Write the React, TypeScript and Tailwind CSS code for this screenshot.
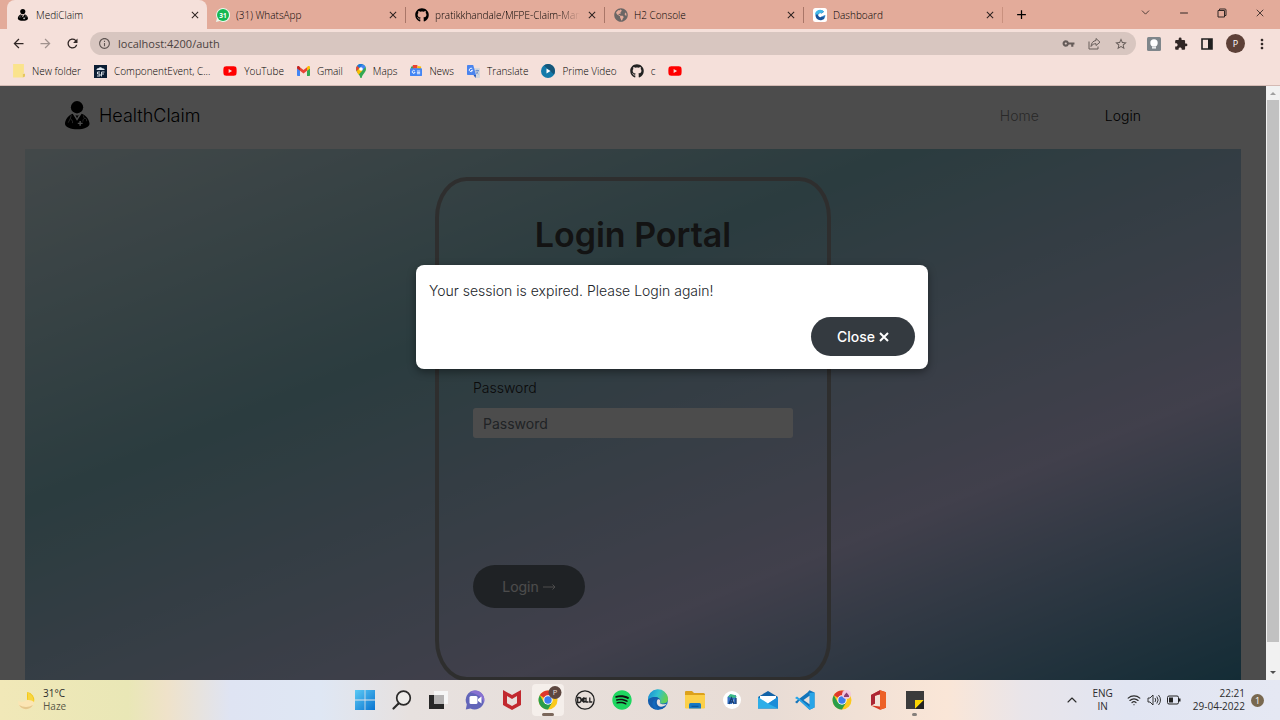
import type { ReactNode } from "react";
import { FaGithub, FaYoutube, FaSpotify, FaGlobeAmericas } from "react-icons/fa";
import {
  MdClose,
  MdAdd,
  MdArrowBack,
  MdArrowForward,
  MdRefresh,
  MdInfoOutline,
  MdVpnKey,
  MdStarBorder,
  MdMoreVert,
  MdExtension,
} from "react-icons/md";
import { ChevronDown, ChevronUp, Minus, X, Wifi } from "lucide-react";

function Doctor({ className }: { className: string }) {
  return (
    <svg viewBox="0 0 26 30" className={className} aria-hidden="true">
      <circle cx="12.5" cy="6.5" r="6.4" fill="#000" />
      <path
        d="M8 13.200 12.500 20.500l4.800-7.300c5 2 8.200 6.500 8.200 10.500 0 3.600-6 5.800-12.700 5.800S0 27.300 0 23.700c0-4 3-8.500 8-10.500Z"
        fill="#000"
      />
      <path d="m10.800 14.300 1.200.7h1.200l1.200-.7-1.900 3.700Z" fill="#000" />
      <path
        d="M6.500 14.800 5.600 18m0 0-2.200 4.500m2.200-4.500 2.200 3v2M19 15l1 3m-1.500 3.500c0-2 1-3.500 2.300-3.500s1.700 1 1.700 3"
        fill="none"
        stroke="#aaa"
        strokeWidth=".8"
      />
      <path d="M15 20.800h1.500v1.700h1.800V24h-1.800v1.800H15V24h-1.700v-1.500H15Z" fill="#fff" />
    </svg>
  );
}

function WhatsApp() {
  return (
    <svg viewBox="0 0 14 14" className="size-[14px] shrink-0" aria-hidden="true">
      <path d="M7 0a7 7 0 1 1-3.300 13.100L0 14l.9-3.700A7 7 0 0 1 7 0Z" fill="#e9f7ec" />
      <circle cx="7" cy="7" r="6" fill="#16b853" />
      <text x="7" y="9.500" textAnchor="middle" fontSize="6.500" fontWeight="700" fill="#fff" fontFamily="Open Sans, sans-serif">31</text>
    </svg>
  );
}

function DashboardMark() {
  return (
    <svg viewBox="0 0 14 14" className="size-[14px] shrink-0" aria-hidden="true">
      <rect width="14" height="14" rx="2.500" fill="#fff" />
      <path d="M12 9.500A5 5 0 1 1 11 3.700L8.500 5.500a2 2 0 1 0 .2 2.900Z" fill="#17539c" />
      <path d="M2 6.500A5 5 0 0 1 11 3.700L8.500 5.300A3 3 0 0 0 5 6.500Z" fill="#42b7e8" />
      <path d="m8.500 8.400 3.500 1.100.3-2.500Z" fill="#2b7cc4" />
    </svg>
  );
}

function Gmail() {
  return (
    <svg viewBox="0 0 13 10" className="w-[13px] shrink-0" aria-hidden="true">
      <path d="M0 2v7.200c0 .5.300.8.800.8H3V4.500Z" fill="#4285f4" />
      <path d="M13 2v7.200c0 .5-.3.800-.8.800H10V4.500Z" fill="#34a853" />
      <path d="M3 1.200 6.500 4 10 1.200v3.600L6.500 7.400 3 4.800Z" fill="#ea4335" />
      <path d="M0 1.500C0 .2 1.300-.3 2.300.5l.7.600v3.700L0 2.600Z" fill="#c5221f" />
      <path d="M13 1.500c0-1.300-1.300-1.800-2.300-1l-.7.600v3.700l3-2.200Z" fill="#fbbc04" />
    </svg>
  );
}

function MapsPin() {
  return (
    <svg viewBox="0 0 10 14" className="h-[14px] shrink-0" aria-hidden="true">
      <path d="M5 0a5 5 0 0 1 5 5c0 3.500-3.600 5-4.200 8.400-.2.800-1.400.8-1.600 0C3.700 10 0 8.500 0 5a5 5 0 0 1 5-5Z" fill="#34a853" />
      <path d="M1.200 1.800 3.500 4 .7 7.300A5 5 0 0 1 1.200 1.800Z" fill="#ea4335" />
      <path d="M1.200 1.800A5 5 0 0 1 6.500.2L3.500 4Z" fill="#1a73e8" />
      <path d="M6.500.2a5 5 0 0 1 3.100 2.700L6.500 6.500 3.500 4Z" fill="#4285f4" />
      <path d="M.7 7.300 3.500 4l3 2.500-4 4.300A17 17 0 0 1 .7 7.300Z" fill="#fbbc04" />
      <circle cx="5" cy="5" r="1.800" fill="#fff" />
    </svg>
  );
}

function News() {
  return (
    <svg viewBox="0 0 13 12" className="w-3 shrink-0" aria-hidden="true">
      <path d="M1 2 4 1v4H1Z" fill="#34a853" />
      <path d="M3 0h5v4H3Z" fill="#ea4335" />
      <path d="m8 1 4 .6V5H8Z" fill="#fbbc04" />
      <rect y="3.500" width="13" height="8.500" rx="1" fill="#4285f4" />
      <path d="M5.300 6.500A1.600 1.600 0 1 0 5.500 8H4M7.500 6.500h3.500M7.500 8h3.500M7.500 9.500h3.500" fill="none" stroke="#fff" strokeWidth=".9" />
    </svg>
  );
}

function Translate() {
  return (
    <svg viewBox="0 0 13 13" className="w-[13px] shrink-0" aria-hidden="true">
      <path d="M5 3h7.300c.4 0 .7.300.7.700v8.600c0 .4-.3.700-.7.700H8.500Z" fill="#d3d7de" />
      <path d="M.7 0h5.500L9 10H.7a.7.700 0 0 1-.7-.7V.7C0 .3.300 0 .7 0Z" fill="#4a84ee" />
      <path d="m6.500 10 2 3L9 10Z" fill="#2452b5" />
      <path d="M5.400 4a1.700 1.700 0 1 0 .2 1.500H4" fill="none" stroke="#fff" strokeWidth=".9" />
      <path d="M8.500 5.500H12M10 4.700v.8m1.200 0c-.2 1.500-1 2.500-2.200 3.300m0-2.500c.6 1.200 1.500 2 2.500 2.800" fill="none" stroke="#547fc5" strokeWidth=".7" />
    </svg>
  );
}

function PrimeVideo() {
  return (
    <svg viewBox="0 0 14 14" className="size-[14px] shrink-0" aria-hidden="true">
      <circle cx="7" cy="7" r="7" fill="#137aaa" />
      <path d="M7 0a7 7 0 0 1 6 10.500L3 1.500A7 7 0 0 1 7 0Z" fill="#155679" />
      <path d="m5.500 4.500 4 2.500-4 2.500Z" fill="#fff" />
    </svg>
  );
}

function ForceBadge() {
  return (
    <svg viewBox="0 0 13 13" className="size-[13px] shrink-0" aria-hidden="true">
      <rect width="13" height="13" fill="#0b1d33" />
      <path d="M2.500 5C2.500 3.300 4 3 4.500 3.200c.8-1.400 3-1.400 3.500 0 1.500-.3 2.800.6 2.700 1.800Z" fill="#dfe8f0" />
      <path d="M6 7H3.500v2H6v2H3M7.500 11.500V7h3M7.500 9h2.500" fill="none" stroke="#e8eef4" strokeWidth=".9" />
    </svg>
  );
}

function Tab({ icon, title, active, fade, last }: { icon: ReactNode; title: string; active?: boolean; fade?: boolean; last?: boolean }) {
  const shape = active ? "rounded-t-lg bg-[#f5e0da] w-[200px]" : "w-[199px]";
  const divider = active ? "" : last ? "border-r border-[#c9917f]" : "border-r border-[#a97668]";
  return (
    <div className={`${shape} flex h-[29px] items-center`}>
      <div className={`${divider} flex h-4 w-full items-center gap-[6px] pr-[6px] pl-[9px]`}>
        {icon}
        <span
          className={`min-w-0 flex-1 overflow-hidden whitespace-nowrap ${fade ? "[mask-image:linear-gradient(to_right,#000_85%,transparent)]" : ""}`}
        >
          {title}
        </span>
        <button aria-label={`Close ${title}`} className="grid w-3 shrink-0 place-items-center">
          <MdClose className="size-3 text-[#2d2220]" />
        </button>
      </div>
    </div>
  );
}

function TabStrip() {
  return (
    <div className="flex h-[29px] shrink-0 items-center justify-between bg-[#e3ab9a] pl-[7px]">
      <div className="flex text-[10px] leading-4 font-light text-black">
        <Tab active title="MediClaim" icon={<Doctor className="h-3 w-[14px] shrink-0" />} />
        <Tab title="(31) WhatsApp" icon={<WhatsApp />} />
        <Tab fade title="pratikkhandale/MFPE-Claim-Man" icon={<FaGithub className="size-[14px] shrink-0" />} />
        <Tab title="H2 Console" icon={<FaGlobeAmericas className="size-[14px] shrink-0 text-[#6b6665]" />} />
        <Tab last title="Dashboard" icon={<DashboardMark />} />
        <button aria-label="New tab" className="ml-[10px] grid w-4 place-items-center">
          <MdAdd className="size-[15px]" />
        </button>
      </div>
      <div className="flex items-center gap-[26px] pr-[14px] pb-1">
        <button aria-label="Search tabs"><ChevronDown className="size-[13px]" strokeWidth={1.5} /></button>
        <button aria-label="Minimize"><Minus className="size-3" strokeWidth={2} /></button>
        <button aria-label="Restore">
          <svg viewBox="-1 0 12 10" className="h-[10px] w-3" fill="none" stroke="currentColor">
            <path d="M1 2.500h6.500V9H1ZM2.500 2.500V1H8q1 0 1 1v5.500H7.500" />
          </svg>
        </button>
        <button aria-label="Close window"><X className="size-3" strokeWidth={1.7} /></button>
      </div>
    </div>
  );
}

function AddressBar() {
  return (
    <div className="flex h-[29px] shrink-0 items-center bg-[#f5e0da] pr-[14px] pl-[11px]">
      <div className="flex items-center gap-3">
        <button aria-label="Back"><MdArrowBack className="size-[15px]" /></button>
        <button aria-label="Forward"><MdArrowForward className="size-[15px] text-[#a1928e]" /></button>
        <button aria-label="Reload"><MdRefresh className="size-[15px]" /></button>
      </div>
      <div className="ml-[10px] flex h-[23px] min-w-0 flex-1 items-center rounded-full bg-[#d8c6c0] px-2">
        <MdInfoOutline className="size-[13px] text-[#5f5552]" />
        <input
          aria-label="Address"
          defaultValue="localhost:4200/auth"
          className="ml-[7px] min-w-0 flex-1 bg-transparent text-[11px] leading-4 text-[#4b4240] outline-none"
        />
        <div className="flex items-center gap-[13px] text-[#665c59]">
          <button aria-label="Passwords"><MdVpnKey className="size-[13px]" /></button>
          <button aria-label="Share">
            <svg viewBox="0 0 13 13" className="size-[13px]" fill="none" stroke="currentColor">
              <path d="M1 4.500v7.500h9V9.500M8 1.500l4 3.700L8 8.500V6.700C6 6.600 4.300 7.400 3 9.500c.3-3.500 2-5.600 5-6Z" />
            </svg>
          </button>
          <button aria-label="Bookmark"><MdStarBorder className="size-[14px]" /></button>
        </div>
      </div>
      <div className="ml-[11px] flex items-center gap-[13px]">
        <button aria-label="Extension">
          <svg viewBox="0 0 14 14" className="size-[14px]">
            <rect width="14" height="14" rx="1.500" fill="#7f868b" />
            <circle cx="7" cy="6" r="3.700" fill="#fff" />
            <path d="M5 8h4v3.500H5Z" fill="#fff" />
            <path d="M5 9.800h4" stroke="#9aa0a4" strokeWidth=".7" />
          </svg>
        </button>
        <button aria-label="Extensions"><MdExtension className="size-[14px]" /></button>
        <button aria-label="Side panel">
          <svg viewBox="0 0 12 12" className="size-3">
            <path d="M1 1h10v10H1Z" fill="none" stroke="#202020" strokeWidth="1.600" />
            <path d="M7 1h4v10H7Z" fill="#202020" />
          </svg>
        </button>
        <button aria-label="Profile" className="grid size-[19px] place-items-center rounded-full bg-[#5d4037] text-[9px] text-white">P</button>
        <button aria-label="Menu" className="-mx-1"><MdMoreVert className="size-4" /></button>
      </div>
    </div>
  );
}

function Bookmark({ icon, label, name }: { icon: ReactNode; label?: string; name?: string }) {
  return (
    <a href="#" aria-label={name} className="flex items-center gap-[7px]">
      {icon}
      {label && <span className="whitespace-nowrap">{label}</span>}
    </a>
  );
}

function Bookmarks() {
  return (
    <nav aria-label="Bookmarks" className="flex h-7 shrink-0 items-center gap-[13px] border-b border-[#d4bab4] bg-[#f5e0da] px-3 pb-px text-[10px] leading-4 font-light text-black">
      <Bookmark
        label="New folder"
        icon={
          <svg viewBox="0 0 12 13" className="w-[13px] shrink-0">
            <path d="M1 0h10v8l-1 1v3.500H1Z" fill="#fae38c" />
            <path d="M10 9h2v2.500l-2 1Z" fill="#e6c75c" />
          </svg>
        }
      />
      <Bookmark label="ComponentEvent, C..." icon={<ForceBadge />} />
      <Bookmark label="YouTube" icon={<FaYoutube className="size-[14px] text-[#f00]" />} />
      <Bookmark label="Gmail" icon={<Gmail />} />
      <Bookmark label="Maps" icon={<MapsPin />} />
      <Bookmark label="News" icon={<News />} />
      <Bookmark label="Translate" icon={<Translate />} />
      <Bookmark label="Prime Video" icon={<PrimeVideo />} />
      <Bookmark label="c" icon={<FaGithub className="size-[14px] text-[#222]" />} />
      <Bookmark name="YouTube" icon={<FaYoutube className="size-[14px] text-[#f00]" />} />
    </nav>
  );
}

function Site() {
  return (
    <div className="relative min-w-0 flex-1 overflow-hidden bg-white font-[Inter,sans-serif]">
      <header className="flex h-[63px] items-center justify-between pr-[125px] pb-1 pl-[65px]">
        <a href="#" className="flex items-center gap-[9px] text-[18px] font-light text-black">
          <Doctor className="w-[25px]" />
          HealthClaim
        </a>
        <nav className="flex gap-[66px] text-[14px] font-light">
          <a href="#" className="text-[#8a8a8a]">Home</a>
          <a href="#" className="text-black">Login</a>
        </nav>
      </header>
      <main className="mx-[25px] flex justify-center bg-[linear-gradient(158deg,#dff2f6_0%,#90c9d3_35%,#dad5fd_71%,#4294b4_100%)] pt-7">
        <form className="flex h-[504px] w-[396px] flex-col rounded-[8%] border-4 border-[#9c9c9c] px-[34px] pt-8">
          <h1 className="text-center text-[34px] leading-[44px] font-semibold text-[#404040]">Login Portal</h1>
          <input aria-label="Username" className="mt-[50px] h-[30px] rounded-[3px] bg-white px-[10px] text-[14px]" />
          <label htmlFor="password" className="mt-[41px] text-[14px] leading-5 font-light text-[#222]">Password</label>
          <input id="password" type="password" placeholder="Password" className="mt-[10px] h-[30px] rounded-[3px] bg-white px-[10px] text-[14px] placeholder:text-[#6c757d]" />
          <button type="button" className="mt-[127px] flex h-[43px] w-28 items-center justify-center gap-1 rounded-full bg-[#6a747d] text-[14px] text-white">
            Login
            <svg viewBox="0 0 13 8" className="w-[13px]" fill="none" stroke="currentColor"><path d="M0 4h12M9.500 1.500 12 4l-2.500 2.500" /></svg>
          </button>
        </form>
      </main>
      <div className="absolute inset-0 bg-black/70 pt-[179px] pl-[78px]">
        <div role="alertdialog" aria-labelledby="session-message" className="mx-auto flex h-[104px] w-[512px] flex-col justify-between rounded-lg bg-white p-[13px] shadow-[0_3px_8px_rgba(0,0,0,0.4)]">
          <p id="session-message" className="pt-[3px] text-[14px] leading-5 font-light text-[#212529]">Your session is expired. Please Login again!</p>
          <button className="flex h-[39px] w-[104px] items-center justify-center gap-1 self-end rounded-full bg-[#343a40] text-[14px] font-medium text-white">
            Close
            <svg viewBox="0 0 10 10" className="size-[10px]" stroke="currentColor" strokeWidth="2"><path d="m1 1 8 8M9 1 1 9" /></svg>
          </button>
        </div>
      </div>
    </div>
  );
}

function Scrollbar() {
  return (
    <div className="flex w-[14px] shrink-0 flex-col items-center bg-[#f1f1f1]" aria-hidden="true">
      <svg viewBox="0 0 14 14" className="size-[14px] shrink-0"><path d="m4 9 3-3 3 3Z" fill="#a0a0a0" /></svg>
      <div className="w-3 flex-1 bg-[#c1c1c1]" />
      <svg viewBox="0 0 14 38" className="h-[38px] w-[14px] shrink-0"><path d="m4 29 3 3 3-3Z" fill="#505050" /></svg>
    </div>
  );
}

const apps: { name: string; art: ReactNode }[] = [
  { name: "Start", art: <><defs><linearGradient id="win" x2="1" y2="1"><stop stopColor="#5ccaf5" /><stop offset="1" stopColor="#0873d0" /></linearGradient></defs><path d="M0 0h9.600v9.600H0ZM10.400 0H20v9.600h-9.600ZM0 10.400h9.600V20H0ZM10.400 10.400H20V20h-9.600Z" fill="url(#win)" /></> },
  { name: "Search", art: <><circle cx="11.500" cy="8" r="6.800" fill="#eeecea" stroke="#2a2929" strokeWidth="1.700" /><path d="m6.500 13.500-5 5" stroke="#2a2929" strokeWidth="2.200" strokeLinecap="round" /></> },
  { name: "Task view", art: <><path d="M1 5h15v14H1Z" fill="#272727" /><path d="M6 1h14v13H6Z" fill="#f6f6f6" /><path d="M6 5h10v9H6Z" fill="#b5b3b3" /></> },
  { name: "Chat", art: <><path d="M10 .5a9.500 9.500 0 1 1-4.500 18L.8 19.500l1-5A9.500 9.500 0 0 1 10 .5Z" fill="#6265b9" /><path d="M10 .5A9.500 9.500 0 0 1 19 13c-3-9-10-9-14-11A9 9 0 0 1 10 .5Z" fill="#8771d1" /><rect x="4.500" y="6" width="8" height="8" rx="1.500" fill="#fff" /><path d="m13 9 3.500-2.500v7L13 11Z" fill="#fff" /></> },
  { name: "McAfee", art: <path d="M1 0 10 5l9-5v15l-9 5-9-5ZM5 6v7.200l5 2.800 5-2.800V6l-5 3Z" fill="#c2292f" fillRule="evenodd" /> },
  { name: "Chrome", art: <Chrome badge /> },
  { name: "Dell", art: <><circle cx="10" cy="10" r="9.200" fill="none" stroke="#202020" strokeWidth="1.300" /><path d="M2.700 7.500v5h1.200q2.200 0 2.200-2.500T3.900 7.500ZM6.200 10l2.700-2.200 1 .7-2 1.500 2 1.500-1 .7ZM11 7.500v4.500h2.500M14.800 7.500v4.500h2.500" fill="none" stroke="#202020" strokeWidth="1.300" /></> },
  { name: "Spotify", art: <><circle cx="10" cy="10" r="9" fill="#111" /><FaSpotify size={20} color="#1ed760" /></> },
  { name: "Edge", art: <><defs><linearGradient id="edge" x2="1" y2=".3"><stop stopColor="#1687d4" /><stop offset=".55" stopColor="#32c1d0" /><stop offset="1" stopColor="#62cf55" /></linearGradient></defs><circle cx="10" cy="10" r="10" fill="#1268bd" /><path d="M0 10A10 10 0 0 1 20 8.500c.5 4-3 5.200-6.500 5-1.800-.2-2-1-1.200-2.200C13 8 5.500 4.500 0 10Z" fill="url(#edge)" /><path d="M0 10c5.500-5.500 13-2 12.300 1.300-1 1.800.3 3.300 4 3.200 1.200 0 2-.5 2.700-.8A10 10 0 0 1 14 19C8 19.500 5.500 12.500 8.500 9 6 9.500 4 12 4.500 15A8 8 0 0 0 10 20 10 10 0 0 1 0 10Z" fill="#155cab" /><path d="M9.500 9.700c.7-1 2.800-.3 2.800 1.300-1.500 2.300 1 4.200 6.700 2.700-2 2.300-4 3-6 3-3.500-.2-5.300-4.200-3.500-7Z" fill="#e6e0df" /></> },
  { name: "File Explorer", art: <><path d="M0 2q0-1 1-1h6l2 2h9.500q1.500 0 1.500 1.500V18H0Z" fill="#dca11c" /><path d="M0 5h20v12.500q0 1-1 1H1q-1 0-1-1Z" fill="#fcd049" /><path d="M4 14.500q0-1.500 1.500-1.500h9q1.500 0 1.500 1.500v4H4Z" fill="#1778c4" /><path d="M6.500 15.700h7v1.300h-7Z" fill="#0d5798" /></> },
  { name: "Android Studio", art: <><circle cx="10" cy="10" r="9" fill="#fff" /><path d="M5.500 14V7L8 4.500 11 6l3-1v9h-2V9l-2 5Z" fill="#3571c7" /><path d="m6 7 2.500-3 4 1L15 7l-3 1Z" fill="#3dba86" /><path d="m7 14 2.500-6 2.500 6m-4-2h3.500M14 8v6" fill="none" stroke="#173d72" strokeWidth="1.300" /></> },
  { name: "Mail", art: <><path d="M0 7 10 1l10 6v11.500H0Z" fill="#1263a8" /><path d="M2 6h16v8H2Z" fill="#fff" /><path d="m0 7 10 6.500L20 7v11.500H0Z" fill="#2daee8" /><path d="m10 13.500 10-6.500v11.500Z" fill="#1a8cd8" /></> },
  { name: "Visual Studio Code", art: <><path d="m14.500.3 5 2.300v14.800l-5 2.300-10-9.200L2 13.500 0 12l12.500-9.500Z" fill="#1174bb" /><path d="m0 8 2-1.500L14.500 17V3l5-.4v14.800l-5 2.300L5.500 11.400Z" fill="#28a5e8" /><path d="m14.500 5.700-6 4.300 6 4.300Z" fill="#e7e0dd" /></> },
  { name: "Chrome profile", art: <Chrome /> },
  { name: "Office", art: <><path d="M3 5 12 .3l6 2v15.500l-6 2-9-4.300 9 1V4.200L7 5.800v7.800L3 15.500Z" fill="#d83b22" /><path d="m12 .3 6 2v15.500l-6 2Z" fill="#ed6227" /><path d="M3 5 12 .3v3.900L7 5.800v7.800L3 15.500Z" fill="#ab2634" /></> },
  { name: "Sticky Notes", art: <><path d="M1 1h18v18H1Z" fill="#3b3b3b" /><path d="M10 10h9l-9 9Z" fill="#fbd602" /><path d="m10 19 9-9v9Z" fill="#222" /></> },
];

function Chrome({ badge }: { badge?: boolean }) {
  return (
    <>
      <circle cx="10" cy="10" r="9.500" fill="#fbc91c" />
      <path d="M10 10 1.800 5.250A9.500 9.500 0 0 1 18.200 5.250H10Z" fill="#df382d" />
      <path d="M1.800 5.250A9.500 9.500 0 0 0 10 19.500l4.100-7.100L10 10 5.900 12.400Z" fill="#2a9d4a" />
      <circle cx="10" cy="10" r="4.700" fill="#fff" />
      <circle cx="10" cy="10" r="3.700" fill="#3d7ded" />
      {badge ? (
        <>
          <circle cx="17" cy="2.500" r="6.500" fill="#5d4740" />
          <text x="17" y="5.200" textAnchor="middle" fontSize="7.500" fill="#e5dcda">P</text>
        </>
      ) : (
        <>
          <circle cx="14.500" cy="4.500" r="4.500" fill="#f0c7df" />
          <path d="M12 7V5.500l2.500-3 2.500 3V7Z" fill="#8a3d74" />
        </>
      )}
    </>
  );
}

function Taskbar() {
  return (
    <footer className="relative flex h-10 shrink-0 items-center justify-between bg-[linear-gradient(90deg,#f1e8b8_0%,#e9e7b6_10%,#efe2c9_13%,#dfe4f3_18%,#dfe7f4_25%,#e7e1df_32%,#e8dcd5_60%,#fae6d7_74%,#e9e5ea_80%,#e1e5f2_88%,#e5e8f3_100%)] px-4 text-[10px] leading-[13px] text-[#2c2c2c]">
      <div className="flex items-center gap-[7px]">
        <svg viewBox="0 0 20 20" className="size-5" aria-hidden="true">
          <path d="M11 2a8 8 0 0 1 7 10l-7 2Z" fill="#f3c613" />
          <path d="M11 2q2 4 0 9l3 3 4-2q-1-8-7-10Z" fill="#f8d63f" />
          <path d="M2 11q5 2 8-.5c3-1 6 0 8 1.500a8 8 0 0 1-16-1Z" fill="#fbe5b4" />
          <path d="M3 15a8 8 0 0 0 14 0q-7 4-14 0Z" fill="#e5c88e" />
        </svg>
        <div><p>31°C</p><p className="text-[#5a5848]">Haze</p></div>
      </div>
      <div className="absolute inset-y-0 left-1/2 flex w-[582px] -translate-x-1/2 items-center justify-between">
        {apps.map((app) => (
          <button
            key={app.name}
            aria-label={app.name}
            className={`relative grid h-8 w-8 place-items-center rounded ${app.name === "Chrome" ? "bg-[#f5efeb]" : ""}`}
          >
            <svg viewBox="0 0 20 20" className="size-5 overflow-visible">{app.art}</svg>
            {app.name === "Chrome" && <span className="absolute bottom-0 h-[3px] w-3 rounded-full bg-[#7b675b]" />}
            {app.name === "Sticky Notes" && <span className="absolute bottom-0 h-[3px] w-[5px] rounded-full bg-[#85807c]" />}
          </button>
        ))}
      </div>
      <div className="flex items-center">
        <button aria-label="Show hidden icons" className="mr-3"><ChevronUp className="size-4" strokeWidth={1.700} /></button>
        <button className="mr-[14px] text-center">ENG<br />IN</button>
        <div className="mr-3 flex items-center gap-[6px]">
          <Wifi className="size-[14px]" strokeWidth={2} />
          <svg viewBox="0 0 14 12" className="w-[14px]" fill="none" stroke="#222" strokeWidth=".9">
            <path d="M1 4h2l3-3v10L3 8H1ZM8 4q1.500 2 0 4M9.800 2.500q2.700 3.500 0 7M11.500 1q4 5 0 10" />
          </svg>
          <svg viewBox="0 0 14 10" className="w-[14px]"><rect x=".5" y="1" width="11" height="8" rx="1.500" fill="none" stroke="#222" /><path d="M2 2.500h4v5H2ZM12 3.500h1.500v3H12Z" fill="#222" /></svg>
        </div>
        <div className="mr-[6px] text-right"><p>22:21</p><p>29-04-2022</p></div>
        <button aria-label="1 notification" className="grid size-[13px] place-items-center rounded-full bg-[#78684f] text-[9px] text-white">1</button>
      </div>
    </footer>
  );
}

export default function App() {
  return (
    <div className="flex h-screen flex-col overflow-hidden font-['Open_Sans',sans-serif] text-[#302624]">
      <TabStrip />
      <AddressBar />
      <Bookmarks />
      <div className="flex min-h-0 flex-1">
        <Site />
        <Scrollbar />
      </div>
      <Taskbar />
    </div>
  );
}
